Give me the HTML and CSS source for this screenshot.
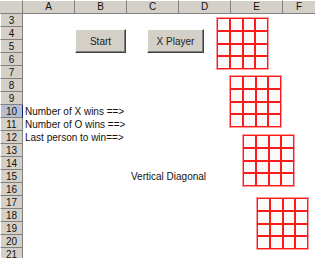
FILE: index.html
```html
<!DOCTYPE html>
<html lang="en">
<head>
  <meta charset="UTF-8" />
  <title>Tic Tac Toe sheet</title>
  <link rel="stylesheet" href="styles.css">
</head>
<body>

<div class="sheet">
  <div class="colhead">
    <div class="corner"></div>
    <div class="ch">A</div>
    <div class="ch">B</div>
    <div class="ch">C</div>
    <div class="ch">D</div>
    <div class="ch">E</div>
    <div class="ch last">F</div>
  </div>

  <div class="row"><div class="rh">3</div><div class="cells"></div></div>
  <div class="row"><div class="rh">4</div><div class="cells"></div></div>
  <div class="row"><div class="rh">5</div><div class="cells"></div></div>
  <div class="row"><div class="rh">6</div><div class="cells"></div></div>
  <div class="row"><div class="rh">7</div><div class="cells"></div></div>
  <div class="row"><div class="rh">8</div><div class="cells"></div></div>
  <div class="row"><div class="rh">9</div><div class="cells"></div></div>
  <div class="row"><div class="rh active">10</div><div class="cells">Number of X wins ==&gt;</div></div>
  <div class="row"><div class="rh">11</div><div class="cells">Number of O wins ==&gt;</div></div>
  <div class="row"><div class="rh">12</div><div class="cells">Last person to win==&gt;</div></div>
  <div class="row"><div class="rh">13</div><div class="cells"></div></div>
  <div class="row"><div class="rh">14</div><div class="cells"></div></div>
  <div class="row"><div class="rh">15</div><div class="cells"><span class="note">Vertical Diagonal</span></div></div>
  <div class="row"><div class="rh">16</div><div class="cells"></div></div>
  <div class="row"><div class="rh">17</div><div class="cells"></div></div>
  <div class="row"><div class="rh">18</div><div class="cells"></div></div>
  <div class="row"><div class="rh">19</div><div class="cells"></div></div>
  <div class="row"><div class="rh">20</div><div class="cells"></div></div>
  <div class="row"><div class="rh">21</div><div class="cells"></div></div>

  <button class="xl-btn start-btn">Start</button>
  <button class="xl-btn player-btn">X Player</button>

  <div class="board b1"></div>
  <div class="board b2"></div>
  <div class="board b3"></div>
  <div class="board b4"></div>
</div>

<script>
  // fill every board with 16 empty squares
  document.querySelectorAll('.board').forEach(board => {
    for (let i = 0; i < 16; i++) {
      const sq = document.createElement('div');
      sq.className = 'sq';
      board.appendChild(sq);
    }
  });
</script>

</body>
</html>
```

FILE: styles.css
```css
body {
  margin: 0;
  font-family: "Liberation Sans", Arial, sans-serif;
  background: #fff;
  overflow: hidden;
}
.sheet {
  position: relative;
  width: 315px;
  height: 258px;
  overflow: hidden;
}
.colhead {
  display: flex;
  height: 14px;
  background: #d4d0c8;
}
.corner,
.ch {
  box-sizing: border-box;
  height: 14px;
  border-right: 1px solid #808080;
  border-bottom: 1px solid #808080;
  border-top: 1px solid #fff;
  font-size: 10px;
  line-height: 12px;
  text-align: center;
  color: #111;
}
.corner {
  width: 23px;
}
.ch {
  width: 52px;
}
.ch.last {
  flex: 1;
  border-right: none;
}
.row {
  display: flex;
  height: 13px;
}
.rh {
  box-sizing: border-box;
  width: 23px;
  height: 13px;
  background: #d4d0c8;
  border-right: 1px solid #808080;
  border-bottom: 1px solid #808080;
  border-left: 1px solid #fff;
  font-size: 10px;
  line-height: 13px;
  text-align: center;
  color: #111;
}
.rh.active {
  background: #b6bdd2;
  border-right-color: #0a246a;
}
.cells {
  flex: 1;
  padding-left: 2px;
  font-size: 10px;
  line-height: 13px;
  color: #111;
  white-space: nowrap;
}
.note {
  margin-left: 106px;
}
.xl-btn {
  position: absolute;
  top: 29px;
  height: 24px;
  padding: 0;
  background: #d4d0c8;
  border: 1px solid;
  border-color: #fff #404040 #404040 #fff;
  box-shadow: inset -1px -1px #808080;
  font-family: "Liberation Sans", Arial, sans-serif;
  font-size: 10px;
  color: #222;
}
.start-btn {
  left: 75px;
  width: 51px;
}
.player-btn {
  left: 147px;
  width: 57px;
}
.board {
  position: absolute;
  width: 53px;
  height: 53px;
  box-sizing: border-box;
  border: 1px solid #ff9999;
  display: grid;
  grid-template-columns: repeat(4, 1fr);
  grid-template-rows: repeat(4, 1fr);
}
.sq {
  border: 1px solid #ff1a1a;
  background: #fafafa;
}
.b1 { left: 216px; top: 17px; }
.b2 { left: 229px; top: 75px; }
.b3 { left: 242px; top: 134px; }
.b4 { left: 256px; top: 197px; }
```
